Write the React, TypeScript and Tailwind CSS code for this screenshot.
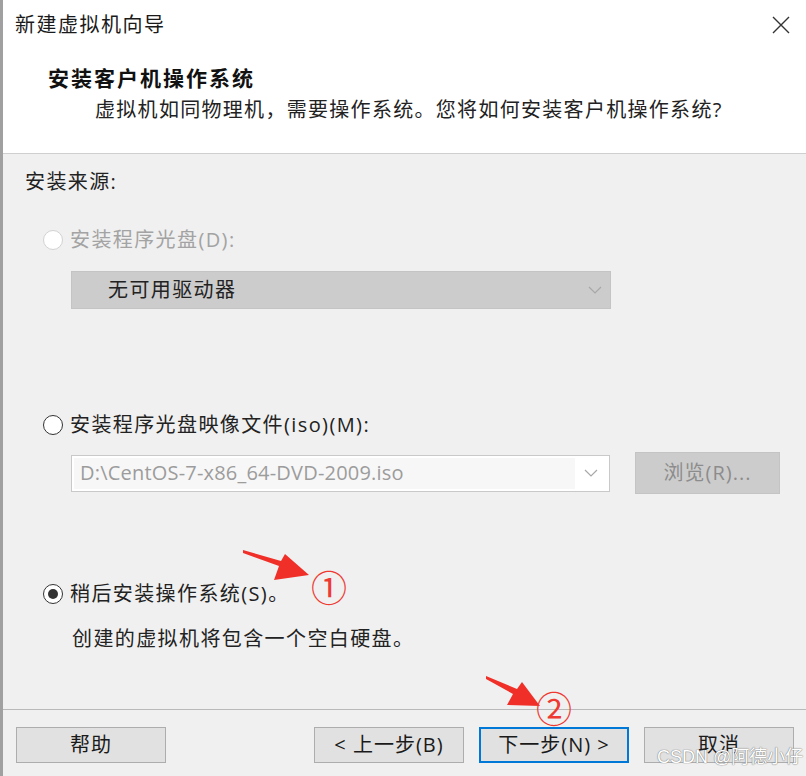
import React from "react";

function Radio({ state }: { state: "disabled" | "off" | "on" }) {
  if (state === "disabled") {
    return <span className="w-5 h-5 rounded-full border border-[#d2d2d2] bg-white shrink-0" />;
  }
  return (
    <span className="w-5 h-5 rounded-full border-[1.5px] border-[#333333] bg-white shrink-0 flex items-center justify-center">
      {state === "on" && <span className="w-[10px] h-[10px] rounded-full bg-[#333333]" />}
    </span>
  );
}

function Chevron({ color }: { color: string }) {
  return (
    <svg width="14" height="8" viewBox="0 0 14 8" fill="none">
      <path d="M1 1 L7 7 L13 1" stroke={color} strokeWidth="1.2" />
    </svg>
  );
}

function Btn({ children, primary }: { children: React.ReactNode; primary?: boolean }) {
  return (
    <div
      className={`w-[150px] h-9 flex items-center justify-center bg-[#e1e1e1] text-[20px] text-[#1a1a1a] tracking-[1px] ${
        primary ? "border-2 border-[#0078d7]" : "border border-[#adadad]"
      }`}
    >
      {children}
    </div>
  );
}

export default function App() {
  return (
    <div className="relative w-[806px] h-[776px] overflow-hidden bg-[#f0f0f0] border-l-[3px] border-[#a0a0a0] font-['Open_Sans','Noto_Sans_CJK_SC',sans-serif] leading-7">
      {/* header */}
      <div className="h-[154px] bg-white border-b border-[#cfcfcf] flex flex-col">
        <div className="h-[50px] flex items-center justify-between pl-3 pr-[16px]">
          <span className="text-[20px] text-[#1a1a1a] tracking-[1.5px]">新建虚拟机向导</span>
          <svg width="18" height="18" viewBox="0 0 18 18">
            <path d="M1 1 L17 17 M17 1 L1 17" stroke="#333" strokeWidth="1.4" />
          </svg>
        </div>
        <div className="pl-[45px] pt-[14px] text-[21px] font-bold text-[#111] tracking-[2px]">安装客户机操作系统</div>
        <div className="pl-[92px] pt-[4px] text-[20px] text-[#222] tracking-[1.3px]">
          虚拟机如同物理机，需要操作系统。您将如何安装客户机操作系统?
        </div>
      </div>

      {/* body */}
      <div className="h-[556px] border-b border-[#b9b9b9] pl-[22px] pt-[14px] flex flex-col text-[20px] tracking-[1.4px]">
        <div className="text-[#222]">安装来源:</div>

        <div className="mt-[30px] ml-[18px] flex items-center gap-[7px] text-[#a3a3a3]">
          <Radio state="disabled" />
          <span>安装程序光盘(D):</span>
        </div>
        <div className="mt-[17px] ml-[46px] w-[540px] h-[38px] bg-[#cccccc] border border-[#c4c4c4] flex items-center justify-between pl-[36px] pr-[8px] text-[#222]">
          <span>无可用驱动器</span>
          <Chevron color="#a8a8a8" />
        </div>

        <div className="mt-[102px] ml-[18px] flex items-center gap-[7px] text-[#222]">
          <Radio state="off" />
          <span>安装程序光盘映像文件(iso)(M):</span>
        </div>
        <div className="mt-[13px] ml-[46px] flex items-center gap-[25px]">
          <div className="w-[539px] h-[37px] bg-white border border-[#c9c9c9] flex items-center p-[2px]">
            <div className="flex-1 h-full bg-[#f7f7f7] flex items-center pl-[6px] text-[#9c9c9c] tracking-[0.2px]">
              D:\CentOS-7-x86_64-DVD-2009.iso
            </div>
            <div className="w-[32px] flex justify-center">
              <Chevron color="#a8a8a8" />
            </div>
          </div>
          <div className="w-[145px] h-[42px] bg-[#cccccc] border border-[#c4c4c4] flex items-center justify-center text-[#8c8c8c] tracking-[1px]">
            浏览(R)...
          </div>
        </div>

        <div className="mt-[86px] ml-[18px] flex items-center gap-[7px] text-[#222]">
          <Radio state="on" />
          <span>稍后安装操作系统(S)。</span>
        </div>
        <div className="mt-[17px] ml-[47px] text-[#222]">创建的虚拟机将包含一个空白硬盘。</div>
      </div>

      {/* buttons */}
      <div className="pl-[13px] pt-[17px] flex">
        <Btn>帮助</Btn>
        <div className="ml-[148px] flex gap-[15px]">
          <Btn>&lt; 上一步(B)</Btn>
          <Btn primary>下一步(N) &gt;</Btn>
          <Btn>取消</Btn>
        </div>
      </div>

      {/* annotations */}
      <svg className="absolute left-[-3px] top-0 pointer-events-none" width="806" height="776">
        <polygon
          points="243,550 281,561 285,554 309,575 274,580 279,566 243,553"
          fill="#f03028"
        />
        <polygon
          points="486,676 517,689 522,682 540,706 507,705 513,694 486,679"
          fill="#f03028"
        />
      </svg>
      <div className="absolute left-[308px] top-[564px] text-[36px] leading-[44px] text-[#ee3a30] font-['Noto_Sans_CJK_SC',sans-serif]">
        ①
      </div>
      <div className="absolute left-[533px] top-[685px] text-[36px] leading-[44px] text-[#ee3a30] font-['Noto_Sans_CJK_SC',sans-serif]">
        ②
      </div>
      <div className="absolute left-[654px] top-[743px] whitespace-nowrap text-[18px] leading-7 text-white [text-shadow:0_0_1px_#777,0_0_1px_#777] font-['Liberation_Sans','Noto_Sans_CJK_SC',sans-serif]">
        CSDN @阿德小仔
      </div>
    </div>
  );
}
